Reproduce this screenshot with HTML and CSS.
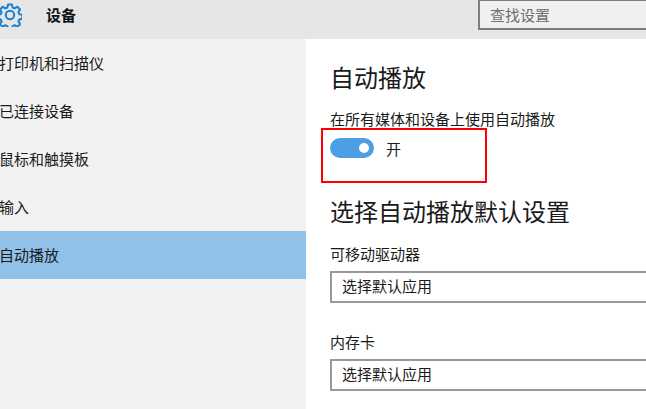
FILE: index.html
```html
<!DOCTYPE html>
<html lang="zh-CN">
<head>
<meta charset="utf-8">
<title>设备</title>
<link rel="stylesheet" href="styles.css">
</head>
<body>
<div class="app">
  <header class="header">
    <svg class="gear" viewBox="0 0 24 24" width="24" height="24" aria-hidden="true">
      <path d="M10 1.5h4l.6 3 2.1.9 2.6-1.7 2.8 2.8-1.7 2.6.9 2.1 3 .6v4l-3 .6-.9 2.1 1.7 2.6-2.8 2.8-2.6-1.7-2.1.9-.6 3h-4l-.6-3-2.1-.9-2.6 1.7-2.8-2.8 1.7-2.6-.9-2.1-3-.6v-4l3-.6.9-2.1-1.7-2.6 2.8-2.8 2.6 1.7 2.1-.9z" fill="none" stroke="#1a80d2" stroke-width="2" stroke-linejoin="round"/>
      <circle cx="12" cy="12" r="4.2" fill="none" stroke="#1a80d2" stroke-width="2"/>
    </svg>
    <h1 class="header-title">设备</h1>
    <div class="search">查找设置</div>
  </header>
  <div class="body">
    <nav class="side">
      <div class="side-item">打印机和扫描仪</div>
      <div class="side-item">已连接设备</div>
      <div class="side-item">鼠标和触摸板</div>
      <div class="side-item">输入</div>
      <div class="side-item active">自动播放</div>
    </nav>
    <main class="main">
      <h2 class="title">自动播放</h2>
      <div class="label-top">在所有媒体和设备上使用自动播放</div>
      <div class="toggle-row">
        <span class="toggle"><span class="knob"></span></span>
        <span class="toggle-text">开</span>
      </div>
      <h2 class="title second">选择自动播放默认设置</h2>
      <div class="label">可移动驱动器</div>
      <div class="select">选择默认应用</div>
      <div class="label card">内存卡</div>
      <div class="select">选择默认应用</div>
    </main>
  </div>
  <div class="annotation"></div>
</div>
</body>
</html>
```
FILE: styles.css
```css
* { box-sizing: border-box; }
html, body { margin: 0; padding: 0; }
body {
  width: 646px;
  height: 409px;
  overflow: hidden;
  background: #fff;
  color: #1a1a1a;
  font-family: "Noto Sans CJK SC", "Liberation Sans", sans-serif;
  font-size: 15px;
}
.app { position: relative; width: 646px; height: 409px; overflow: hidden; }
.header {
  display: flex;
  align-items: flex-start;
  height: 39px;
  background: #e6e6e6;
}
.gear { margin: 3px 0 0 -2px; flex: none; }
.header-title {
  margin: 4px 0 0 24px;
  font-size: 15px;
  font-weight: 700;
  line-height: 22px;
  color: #111;
}
.search {
  width: 300px;
  height: 31px;
  margin: -1px -132px 0 auto;
  padding-left: 10px;
  border: 2px solid #7d7d7d;
  background: #f0f0f0;
  color: #6e6e6e;
  line-height: 27px;
}
.body { display: flex; height: 370px; }
.side { width: 306px; flex: none; background: #f2f2f2; }
.side-item {
  height: 48px;
  line-height: 47px;
  text-indent: -1px;
  white-space: nowrap;
}
.active { background: #90c1e8; }
.main { flex: 1; padding: 21px 0 0 24px; min-width: 0; }
.title {
  margin: 0;
  font-size: 24px;
  font-weight: 400;
  line-height: 34px;
  color: #1a1a1a;
}
.label-top { margin-top: 14px; line-height: 22px; }
.toggle-row { display: flex; align-items: center; height: 24px; margin-top: 6px; }
.toggle {
  display: flex;
  align-items: center;
  justify-content: flex-end;
  width: 44px;
  height: 20px;
  padding-right: 5px;
  border-radius: 10px;
  background: #4c9fe3;
}
.knob { width: 10px; height: 10px; border-radius: 50%; background: #fff; }
.toggle-text { margin-left: 12px; }
.second { margin-top: 34px; }
.label { margin-top: 15px; line-height: 22px; }
.label.card { margin-top: 28px; }
.select {
  width: 340px;
  height: 32px;
  margin-top: 6px;
  padding-left: 10px;
  border: 2px solid #999;
  border-right-width: 0;
  line-height: 25px;
  background: #fff;
}
.annotation {
  position: absolute;
  left: 321px;
  top: 128px;
  width: 166px;
  height: 55px;
  border: 2px solid #f00;
}
```
